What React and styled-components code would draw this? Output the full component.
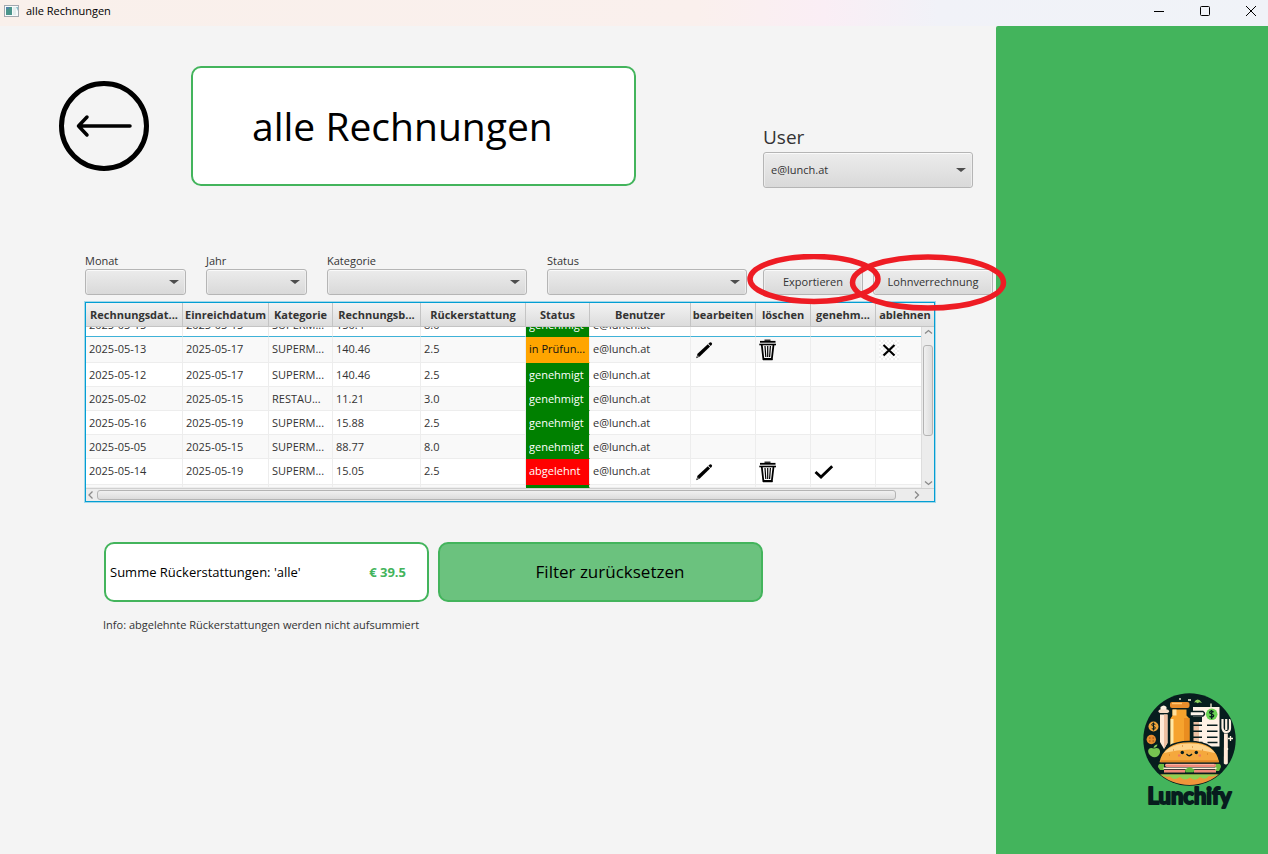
import React from "react";
import styled, { createGlobalStyle, css } from "styled-components";

const green = "#43b45c";
const ink = "#333333";

const GlobalStyle = createGlobalStyle`
  * { box-sizing: border-box; }
  body {
    margin: 0;
    background: #f4f4f4;
    color: ${ink};
    font-family: "Open Sans", "Noto Sans", sans-serif;
    font-size: 11px;
    line-height: 16px;
  }
  button, select { font: inherit; color: inherit; }
`;

const Window = styled.div`
  min-height: 100vh;
  display: flex;
  flex-direction: column;
`;

const TitleBar = styled.header`
  height: 26px;
  display: flex;
  align-items: center;
  padding: 0 4px 5px;
  gap: 7px;
  color: #000;
  background: linear-gradient(90deg, #f9f0eb 0%, #faf0ed 55%, #faeef5 65%, #f1f2f8 74%, #f0f3f8 100%);
`;

const WindowTitle = styled.span`
  flex: 1;
`;

const WindowControls = styled.div`
  display: flex;
  gap: 22px;
  margin-right: 1px;
`;

const WindowButton = styled.button`
  width: 24px;
  height: 20px;
  padding: 0;
  border: 0;
  background: none;
  display: grid;
  place-items: center;
`;

const Content = styled.div`
  flex: 1;
  display: flex;
`;

const Main = styled.main`
  flex: 1;
  min-width: 0;
  position: relative;
  z-index: 1;
`;

const Sidebar = styled.aside`
  width: 272px;
  flex: none;
  background: ${green};
  border-top-left-radius: 2px;
  display: flex;
  align-items: flex-end;
  justify-content: flex-end;
  padding: 0 28px 40px;
`;

const PageHeader = styled.section`
  display: flex;
  align-items: flex-start;
  padding: 40px 23px 0 59px;
`;

const BackButton = styled.button`
  width: 90px;
  height: 90px;
  margin: 15px 42px 0 0;
  padding: 0;
  border: 0;
  background: none;
  flex: none;
  svg { display: block; }
`;

const PageTitle = styled.h1`
  width: 445px;
  height: 120px;
  margin: 0;
  padding-left: 59px;
  display: flex;
  align-items: center;
  border: 2px solid ${green};
  border-radius: 10px;
  background: #fff;
  color: #000;
  font-size: 39px;
  font-weight: 400;
  line-height: 56px;
`;

const Field = styled.div`
  display: flex;
  flex-direction: column;
  width: ${(p) => p.$width}px;
`;

const UserField = styled(Field)`
  margin-left: auto;
  padding-top: 56px;
`;

const Label = styled.label`
  ${(p) =>
    p.$large &&
    css`
      font-size: 19px;
      line-height: 30px;
    `}
`;

const controlFace = css`
  border: 1px solid #b5b5b5;
  border-radius: 3px;
  background: linear-gradient(#ececec, #d9d9d9);
  box-shadow: inset 0 1px 0 #fafafa, inset 1px 0 0 #ededed, inset -1px 0 0 #ededed;
`;

const SelectBox = styled.div`
  position: relative;
  height: ${(p) => (p.$tall ? 36 : 26)}px;
  &::after {
    content: "";
    position: absolute;
    right: 7px;
    top: calc(50% - 2px);
    border: 5px solid transparent;
    border-top: 4px solid #4d4d4d;
    border-bottom: 0;
    pointer-events: none;
  }
`;

const Select = styled.select`
  ${controlFace}
  appearance: none;
  display: block;
  width: 100%;
  height: 100%;
  padding: 0 20px 0 7px;
`;

const Filters = styled.form`
  display: flex;
  align-items: flex-end;
  gap: 20px;
  padding: 65px 3px 7px 85px;
`;

const Actions = styled.div`
  display: flex;
  gap: 10px;
  margin-left: -4px;
`;

const ActionSlot = styled.div`
  position: relative;
`;

const ActionButton = styled.button`
  ${controlFace}
  width: ${(p) => p.$width}px;
  height: 26px;
  padding: 0;
`;

const Marker = styled.svg`
  position: absolute;
  left: ${(p) => p.$left}px;
  top: -15px;
  pointer-events: none;
  z-index: 2;
`;

const TableFrame = styled.div`
  position: relative;
  width: 850px;
  margin-left: 85px;
  border: 1px solid #039ed3;
  box-shadow: 0 0 0 1px #a3d8ea;
  background: #fff;
`;

const Table = styled.table`
  width: 100%;
  table-layout: fixed;
  border-collapse: separate;
  border-spacing: 0;
`;

const HeadCell = styled.th`
  height: 24px;
  padding: 0;
  border-right: 1px solid #c4c4c4;
  border-bottom: 1px solid #c4c4c4;
  background: linear-gradient(#f3f3f3, #dcdcdc);
  font-weight: 700;
  text-align: center;
  white-space: nowrap;
  &:last-child { border-right: 0; }
`;

const statusColors = {
  genehmigt: ["#008000", "#ffffff"],
  "in Prüfun...": ["#ffa500", "#111111"],
  abgelehnt: ["#ff0000", "#ffffff"],
};

const Row = styled.tr`
  background: ${(p) => (p.$odd ? "#f9f9f9" : "#ffffff")};
`;

const Cell = styled.td`
  height: ${(p) => p.$height}px;
  padding: 0 3px;
  border-right: 1px solid #ededed;
  border-bottom: 1px solid ${(p) => (p.$focused ? "#3fb2d8" : "#ededed")};
  white-space: nowrap;
  ${(p) =>
    p.$status &&
    css`
      background: ${statusColors[p.$status][0]};
      color: ${statusColors[p.$status][1]};
      border-bottom-color: ${statusColors[p.$status][0]};
    `}
`;

/* Keeps the lower or upper part of a row that is scrolled partly out of view. */
const Clip = styled.div`
  height: ${(p) => p.$height - 1}px;
  display: flex;
  align-items: ${(p) => (p.$partial === "top" ? "flex-end" : "flex-start")};
  overflow: hidden;
  line-height: 23px;
`;

const IconButton = styled.button`
  align-self: center;
  padding: 0;
  border: 0;
  background: none;
  display: block;
  svg { display: block; }
`;

const VerticalBar = styled.div`
  position: absolute;
  top: 24px;
  right: 0;
  bottom: 13px;
  width: 13px;
  display: flex;
  flex-direction: column;
  align-items: center;
  justify-content: space-between;
  background: #ececec;
  border-left: 1px solid #dddddd;
`;

const HorizontalBar = styled.div`
  height: 13px;
  display: flex;
  align-items: center;
  padding-right: 12px;
  background: #ececec;
  border-top: 1px solid #d0d0d0;
`;

const Thumb = styled.div`
  border: 1px solid #b4b4b4;
  border-radius: 3px;
  background: linear-gradient(${(p) => (p.$vertical ? "90deg" : "180deg")}, #f0f0f0, #dcdcdc);
  ${(p) =>
    p.$vertical
      ? css`
          width: 10px;
          height: 91px;
          margin-bottom: 34px;
        `
      : css`
          width: 799px;
          height: 10px;
          margin-right: auto;
        `}
`;

const Summary = styled.section`
  display: flex;
  gap: 9px;
  margin: 40px 0 15px 104px;
`;

const panel = css`
  width: 325px;
  height: 60px;
  border: 2px solid ${green};
  border-radius: 10px;
  color: #000;
`;

const SumBox = styled.div`
  ${panel}
  display: flex;
  align-items: center;
  justify-content: space-between;
  padding: 0 21px 0 4px;
  background: #fff;
  font-size: 13px;
`;

const Amount = styled.strong`
  color: ${green};
`;

const ResetButton = styled.button`
  ${panel}
  padding: 0 0 0 19px;
  background: #6bc27e;
  font-size: 17px;
`;

const Info = styled.p`
  margin: 0 0 0 103px;
`;

const Logo = styled.div`
  width: 102px;
  svg { display: block; }
`;

const AppIcon = () => (
  <svg width="15" height="12" viewBox="0 0 15 12" aria-hidden="true">
    <rect x=".5" y=".5" width="14" height="11" fill="#f7fafb" stroke="#a3a9b0" />
    <rect x="2" y="2" width="6" height="8" fill="#4b958c" />
    <path d="M2 2h3v2H2z" fill="#5482a8" />
    <path d="M9 2h3v8H9z" fill="#e3eeee" />
    <path d="M12 2h2v4z" fill="#8bc0cb" />
  </svg>
);

const Pencil = () => (
  <svg width="20" height="22" viewBox="0 0 20 22" aria-hidden="true">
    <path d="M3.500 14.800 13.800 5.300l2.300 2.200L5.800 17.500l-3.600 1.700z" />
    <path d="m14.400 4.700 1.300-1.200q1-.6 1.900.3.900 1 .2 1.900l-1.100 1.200z" />
    <path d="m3.700 16.200 1.200 1.100-1.600.7z" fill="#fff" />
  </svg>
);

const Trash = () => (
  <svg width="18" height="22" viewBox="0 0 18 22" fill="none" stroke="#000" aria-hidden="true">
    <path d="M5.500 1.200h6" strokeWidth="1.200" />
    <path d="M1 2.800h15.500" strokeWidth="1.800" />
    <path d="M.3 5.500h16.700" strokeWidth="1.600" />
    <path d="m2.800 6 1.600 14h8.400l1.700-14" strokeWidth="1.800" />
    <path d="m6 7 .8 11M8.700 7v11M11.400 7l-.8 11" strokeWidth="1.200" />
    <path d="M4 20.500h9.500" strokeWidth="1.500" />
  </svg>
);

const Check = () => (
  <svg width="20" height="18" viewBox="0 0 20 18" fill="none" stroke="#000" strokeWidth="2.800" aria-hidden="true">
    <path d="m1.500 9 5.500 5L18.200 3.300" />
  </svg>
);

const Cross = () => (
  <svg width="20" height="20" viewBox="0 0 20 20" aria-hidden="true">
    <defs>
      <pattern id="checker" width="4" height="4" patternUnits="userSpaceOnUse">
        <rect width="4" height="4" fill="#fff" />
        <path d="M0 0h2v2H0zM2 2h2v2H2z" fill="#f0f0f0" />
      </pattern>
    </defs>
    <rect width="20" height="20" fill="url(#checker)" />
    <path d="m4.500 5 11 10.500m0-10.500-11 10.500" stroke="#000" strokeWidth="2.200" />
  </svg>
);

const LunchLogo = () => (
  <svg width="102" height="124" viewBox="0 0 102 124" role="img" aria-label="Lunchify">
    <defs>
      <clipPath id="disc"><circle cx="51.500" cy="49.500" r="45.500" /></clipPath>
    </defs>
    <circle cx="51.500" cy="49.500" r="46.200" fill="#071d1e" />
    <g clipPath="url(#disc)">
      <path d="M22.500 17q3.500-3 6 0v6h-6z" fill="#fff3e4" />
      <rect x="20.500" y="19.500" width="10.500" height="3.500" rx="1.700" fill="#f6dcc6" />
      <path d="M22 24.500h7.500V53L26 59l-4-7z" fill="#ffe9d6" />
      <path d="M26 24.500h3.500V53L26 59z" fill="#efc0a2" />
      <rect x="32" y="12" width="19.500" height="6" rx="2" fill="#e98e2c" />
      <path d="M34 13.500h10" stroke="#ffc56f" strokeWidth="1.500" />
      <path d="M34.500 19.500h14v6l3 3v27h-19v-27l2-3z" fill="#f6a32d" />
      <path d="M32.500 29h3v26h-3z" fill="#ffe8a5" />
      <path d="M34.500 19.500h4v6h-4z" fill="#ffe09a" />
      <path d="M46 28h5.500v28H46z" fill="#ea8d20" />
      <path d="M55 17h26.500v39.500H72L56 52V32h8v-5h-9z" fill="#fff2e5" />
      <path d="M55.500 32h5.500v22l-5.500-3z" fill="#edc1a5" />
      <path d="M52 21.500h13q3 2.200 0 4.500H52z" fill="#fff6ec" stroke="#071d1e" strokeWidth="1.500" />
      <circle cx="73.700" cy="24.300" r="5.800" fill="#69d453" />
      <path d="M75.700 22q-4-2-4 .6c0 1.600 4 1.200 4 3s-2.500 1.700-4.200.8M73.700 20v9" fill="none" stroke="#071d1e" strokeWidth="1.300" />
      <path d="M55 35.200h9m5 0h10.500M55 41.200h9m5 0h10.500M55 47.200h9m5 0h10.500M62 52.500h2.500m5 0h10" stroke="#071d1e" strokeWidth="1.600" />
      <path d="M84.500 29v9q.5 4 4 4t3.500-4v-9M88.200 29v11" fill="none" stroke="#fff0e2" strokeWidth="2.200" />
      <path d="M86 43.500h3.800v30q-2 2-4 0z" fill="#ffe9d8" />
      <circle cx="15.500" cy="36.500" r="5" fill="#eda43a" />
      <path d="M17.300 34.500q-3.500-2-3.500.4c0 1.500 3.500 1.300 3.500 3 0 1.500-2 1.500-3.500.7M15.500 32.500v8" fill="none" stroke="#071d1e" />
      <circle cx="13.300" cy="49.500" r="4.700" fill="#e58b2f" />
      <path d="M11 48h1.500m2 0H16m-5 3h1.500m2 0H16" stroke="#8c4a16" />
      <path d="M16 58.500c6-2.500 8 4 4 7.500q-3.500 2.500-7 0c-5-4-3-10 3-7.500z" fill="#77c551" />
      <path d="M15.500 58q.5-3.500 4-3.500-.5 3-4 3.500" fill="#8ad05e" />
      <path d="M56 12.500q3.500-6 8 .5l-2.500-.8-2 1-1.500-1z" fill="#8ad05e" />
      <path d="M73 13.500v4M42 8v2M92.500 46v5m-2.500-2.500h5M89.500 58v2M50 10h3" stroke="#fff6df" strokeWidth="1.300" />
      <path d="M20 77q0-5 6-3v6h-4zM77 74q6-2 6 3l-2 4h-4z" fill="#69bd42" />
      <rect x="27" y="73.500" width="51" height="3.500" rx="1.700" fill="#ef8a7b" />
      <path d="M28 74.200h48" stroke="#ffc2ad" />
      <path d="M25.500 78.300h53" stroke="#fff0d9" strokeWidth="1.400" />
      <path d="M26 81.200h21m9 0h22" stroke="#ee8978" strokeWidth="3" />
      <path d="m47 79.500 4.500-2.500 5 2.500-1 3h-8z" fill="#5fb63e" />
      <path d="M21 83.300h61" stroke="#071d1e" strokeWidth="1.300" />
      <path d="M22 84.500h60q-4 11-30 11.500Q26 95 22 84.500z" fill="#f0953b" />
      <path d="M23 84.500h57q-5 3-9 1.500-4 5-9 1-5 5-10 .5-6 4-10-.5-7 4-10-.5-6 1-9-2z" fill="#8ed052" />
      <path d="M20.500 73q4-21.500 31-21.500T82 73z" fill="#f5a83d" stroke="#071d1e" strokeWidth="1.500" />
      <path d="M26 63q7-9.500 25.500-9.500T77 63q-25-7-51 0z" fill="#ffd58c" />
      <path d="M22.500 71.200h58" stroke="#e08a26" strokeWidth="2" />
      <path d="M35 60h1m8-4h1m9 1h1m9 3h1m4 4h1M31 65h1" stroke="#c9741d" />
      <circle cx="44.300" cy="62.500" r="1.700" fill="#071d1e" />
      <circle cx="58.300" cy="62.500" r="1.700" fill="#071d1e" />
      <path d="M48.500 64q2.800 3.500 5.500 0" fill="none" stroke="#071d1e" strokeWidth="1.300" />
      <path d="M40 65.500h2.500m18 0H63" stroke="#ef785d" strokeWidth="1.800" />
    </g>
    <text
      x="51.500"
      y="113.500"
      textAnchor="middle"
      fontFamily="Lato, sans-serif"
      fontSize="22"
      fontWeight="700"
      fill="#071d1e"
      stroke="#071d1e"
      strokeWidth="2"
      strokeLinejoin="round"
    >
      Lunchify
    </text>
  </svg>
);

const Chevron = ({ d }) => (
  <svg width="11" height="10" viewBox="0 0 11 10" fill="none" stroke="#8a8a8a" strokeWidth="1.300" aria-hidden="true">
    <path d={d} />
  </svg>
);

const columns = [
  ["Rechnungsdat...", 97],
  ["Einreichdatum", 86],
  ["Kategorie", 64],
  ["Rechnungsb...", 88],
  ["Rückerstattung", 105],
  ["Status", 64],
  ["Benutzer", 101],
  ["bearbeiten", 65],
  ["löschen", 55],
  ["genehm...", 65],
  ["ablehnen", 58],
];

const rows = [
  { data: ["2025-05-15", "2025-05-15", "SUPERM...", "150.4", "8.0"], status: "genehmigt", height: 10, partial: "top" },
  { data: ["2025-05-13", "2025-05-17", "SUPERM...", "140.46", "2.5"], status: "in Prüfun...", height: 26, edit: true, reject: true },
  { data: ["2025-05-12", "2025-05-17", "SUPERM...", "140.46", "2.5"], status: "genehmigt", height: 24 },
  { data: ["2025-05-02", "2025-05-15", "RESTAU...", "11.21", "3.0"], status: "genehmigt", height: 24 },
  { data: ["2025-05-16", "2025-05-19", "SUPERM...", "15.88", "2.5"], status: "genehmigt", height: 24 },
  { data: ["2025-05-05", "2025-05-15", "SUPERM...", "88.77", "8.0"], status: "genehmigt", height: 24 },
  { data: ["2025-05-14", "2025-05-19", "SUPERM...", "15.05", "2.5"], status: "abgelehnt", height: 26, edit: true, approve: true },
  { data: ["", "", "", "", ""], status: "genehmigt", height: 3, partial: "bottom" },
];

const filters = [
  ["monat", "Monat", 101],
  ["jahr", "Jahr", 101],
  ["kategorie", "Kategorie", 200],
  ["status", "Status", 200],
];

function TableRow({ row, odd }) {
  const last = row.partial === "bottom";
  const cell = (content, key, status) => (
    <Cell key={key} $height={row.height} $focused={row.partial === "top"} $status={status}>
      <Clip $height={row.height} $partial={row.partial}>{content}</Clip>
    </Cell>
  );
  return (
    <Row $odd={odd}>
      {row.data.map((value, i) => cell(value, i))}
      {cell(last ? "" : row.status, "status", row.status)}
      {cell(last ? "" : "e@lunch.at", "user")}
      {cell(row.edit && <IconButton type="button" aria-label="bearbeiten"><Pencil /></IconButton>, "edit")}
      {cell(row.edit && <IconButton type="button" aria-label="löschen"><Trash /></IconButton>, "delete")}
      {cell(row.approve && <IconButton type="button" aria-label="genehmigen"><Check /></IconButton>, "approve")}
      {cell(row.reject && <IconButton type="button" aria-label="ablehnen"><Cross /></IconButton>, "reject")}
    </Row>
  );
}

export default function App() {
  return (
    <Window>
      <GlobalStyle />
      <TitleBar>
        <AppIcon />
        <WindowTitle>alle Rechnungen</WindowTitle>
        <WindowControls>
          <WindowButton type="button" aria-label="Minimieren">
            <svg width="12" height="12"><path d="M1 6.500h10" stroke="#000" /></svg>
          </WindowButton>
          <WindowButton type="button" aria-label="Maximieren">
            <svg width="12" height="12"><rect x="1.500" y="1.500" width="9" height="9" rx="1" fill="none" stroke="#000" /></svg>
          </WindowButton>
          <WindowButton type="button" aria-label="Schließen">
            <svg width="12" height="12"><path d="m1 1 10 10M11 1 1 11" stroke="#000" /></svg>
          </WindowButton>
        </WindowControls>
      </TitleBar>
      <Content>
        <Main>
          <PageHeader>
            <BackButton type="button" aria-label="Zurück">
              <svg width="90" height="90" viewBox="0 0 90 90" fill="none" stroke="#000" strokeLinecap="round" strokeLinejoin="round">
                <circle cx="45" cy="45" r="42.500" strokeWidth="5" />
                <path d="M19.500 45H71M28 36l-8.500 9 8.500 9" strokeWidth="3.500" />
              </svg>
            </BackButton>
            <PageTitle>alle Rechnungen</PageTitle>
            <UserField $width={210}>
              <Label htmlFor="user" $large>User</Label>
              <SelectBox $tall>
                <Select id="user"><option>e@lunch.at</option></Select>
              </SelectBox>
            </UserField>
          </PageHeader>

          <Filters>
            {filters.map(([id, label, width]) => (
              <Field key={id} $width={width}>
                <Label htmlFor={id}>{label}</Label>
                <SelectBox>
                  <Select id={id}><option value="" /></Select>
                </SelectBox>
              </Field>
            ))}
            <Actions>
              <ActionSlot>
                <ActionButton type="button" $width={100}>Exportieren</ActionButton>
                <Marker $left={-16} width="134" height="51">
                  <ellipse cx="67" cy="25" rx="64" ry="22.500" fill="none" stroke="#ee1c24" strokeWidth="5.500" />
                </Marker>
              </ActionSlot>
              <ActionSlot>
                <ActionButton type="button" $width={120}>Lohnverrechnung</ActionButton>
                <Marker $left={-24} width="158" height="58">
                  <ellipse cx="79" cy="28.500" rx="75.500" ry="25.500" fill="none" stroke="#ee1c24" strokeWidth="5.500" />
                </Marker>
              </ActionSlot>
            </Actions>
          </Filters>

          <TableFrame>
            <Table>
              <colgroup>
                {columns.map(([name, width]) => <col key={name} width={width} />)}
              </colgroup>
              <thead>
                <tr>{columns.map(([name]) => <HeadCell key={name} scope="col">{name}</HeadCell>)}</tr>
              </thead>
              <tbody>
                {rows.map((row, i) => <TableRow key={i} row={row} odd={i % 2 === 1} />)}
              </tbody>
            </Table>
            <VerticalBar>
              <Chevron d="m2 6.500 3.500-3 3.500 3" />
              <Thumb $vertical />
              <Chevron d="m2 3.500 3.500 3 3.500-3" />
            </VerticalBar>
            <HorizontalBar>
              <Chevron d="m6.500 1.500-3.500 3.500 3.500 3.500" />
              <Thumb />
              <Chevron d="m4 1.500 3.500 3.500L4 8.500" />
            </HorizontalBar>
          </TableFrame>

          <Summary>
            <SumBox>
              <span>Summe Rückerstattungen: 'alle'</span>
              <Amount>€ 39.5</Amount>
            </SumBox>
            <ResetButton type="button">Filter zurücksetzen</ResetButton>
          </Summary>
          <Info>Info: abgelehnte Rückerstattungen werden nicht aufsummiert</Info>
        </Main>
        <Sidebar>
          <Logo><LunchLogo /></Logo>
        </Sidebar>
      </Content>
    </Window>
  );
}
